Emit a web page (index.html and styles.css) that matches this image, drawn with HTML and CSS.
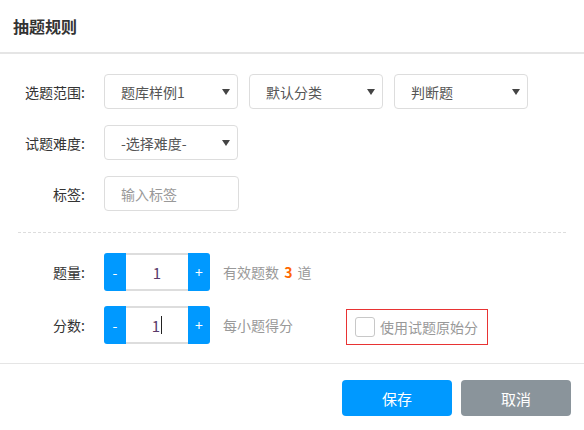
FILE: index.html
```html
<!DOCTYPE html>
<html lang="zh-CN">
<head>
    <meta charset="UTF-8">
    <meta name="viewport" content="width=device-width, initial-scale=1.0">
    <title>抽题规则</title>
    <link rel="stylesheet" href="styles.css">
</head>
<body>

    <div class="dialog">
        <div class="dialog-header">抽题规则</div>

        <div class="dialog-body">
            <div class="form-row">
                <label class="form-label">选题范围:</label>
                <span class="select-wrap">
                    <select class="form-select">
                        <option>题库样例1</option>
                    </select>
                </span>
                <span class="select-wrap">
                    <select class="form-select">
                        <option>默认分类</option>
                    </select>
                </span>
                <span class="select-wrap">
                    <select class="form-select">
                        <option>判断题</option>
                    </select>
                </span>
            </div>

            <div class="form-row">
                <label class="form-label">试题难度:</label>
                <span class="select-wrap">
                    <select class="form-select">
                        <option>-选择难度-</option>
                    </select>
                </span>
            </div>

            <div class="form-row">
                <label class="form-label">标签:</label>
                <input type="text" class="form-input" placeholder="输入标签">
            </div>

            <div class="divider"></div>

            <!-- question count -->
            <div class="form-row stepper-row">
                <label class="form-label">题量:</label>
                <div class="stepper">
                    <button class="step-btn minus">-</button>
                    <div class="step-value">1</div>
                    <button class="step-btn plus">+</button>
                </div>
                <span class="hint">有效题数 <b class="count">3</b> 道</span>
            </div>

            <!-- score per question -->
            <div class="form-row stepper-row">
                <label class="form-label">分数:</label>
                <div class="stepper">
                    <button class="step-btn minus">-</button>
                    <div class="step-value">1<span class="caret"></span></div>
                    <button class="step-btn plus">+</button>
                </div>
                <span class="hint hint-score">每小题得分</span>
                <label class="origin-score">
                    <span class="check-box"></span>
                    使用试题原始分
                </label>
            </div>
        </div>

        <div class="dialog-footer">
            <button class="btn btn-save">保存</button>
            <button class="btn btn-cancel">取消</button>
        </div>
    </div>

</body>
</html>
```

FILE: styles.css
```css
:root {
    --blue: #0099ff; --gray-btn: #8a949b; --border: #dddddd;
    --line: #e5e5e5; --text-dark: #333; --text-medium: #555; --text-light: #999;
    --orange: #ff6600; --red: #e83333;
}
body {
    margin: 0; background-color: #fff; color: var(--text-dark);
    font-family: "Noto Sans CJK SC", "Liberation Sans", sans-serif; font-size: 14px;
}
.dialog { width: 584px; }
.dialog-header {
    height: 52px; line-height: 52px; padding-left: 13px;
    font-size: 16px; font-weight: bold; color: var(--text-dark);
    border-bottom: 2px solid var(--line);
}
.dialog-body { padding: 20px 0 19px; }

.form-row { display: flex; align-items: center; height: 35px; margin-bottom: 16px; }
.form-label { width: 85px; margin-right: 19px; text-align: right; color: var(--text-dark); }

.select-wrap { position: relative; display: inline-block; margin-right: 11px; }
.select-wrap::after {
    content: ""; position: absolute; right: 8px; top: 15px;
    border-left: 4px solid transparent; border-right: 4px solid transparent;
    border-top: 6px solid #444; pointer-events: none;
}
.form-select, .form-input {
    box-sizing: border-box; width: 134px; height: 35px;
    border: 1px solid var(--border); border-radius: 4px; background: #fff;
    font-family: inherit; font-size: 14px; color: var(--text-medium);
    padding: 0 16px; outline: none;
}
.form-select { -webkit-appearance: none; appearance: none; }
.form-input { width: 135px; }
.form-input::placeholder { color: var(--text-light); }

.divider { border-top: 1px dashed var(--border); margin: 21px 18px 20px; }

.stepper-row { height: 38px; margin-bottom: 15px; }
.stepper-row:last-child { margin-bottom: 0; }
.stepper { display: flex; height: 38px; }
.step-btn {
    width: 22px; border: none; padding: 0; background-color: var(--blue);
    color: #fff; font-size: 14px; font-family: inherit; cursor: pointer;
}
.step-btn.minus { border-radius: 3px 0 0 3px; }
.step-btn.plus { border-radius: 0 3px 3px 0; }
.step-value {
    box-sizing: border-box; width: 62px; display: flex; align-items: center; justify-content: center;
    border-top: 2px solid var(--border); border-bottom: 2px solid var(--border);
    color: #5a3a6a; font-size: 15px;
}
.caret { display: inline-block; width: 1px; height: 18px; background: #222; margin-left: 1px; }

.hint { margin-left: 13px; color: var(--text-light); }
.hint .count { color: var(--orange); font-weight: bold; margin: 0 2px; }
.hint-score { width: 70px; }

.origin-score {
    display: flex; align-items: center; gap: 5px; box-sizing: border-box;
    height: 36px; margin-left: 53px; margin-top: 4px; padding: 0 9px 0 8px;
    border: 1px solid var(--red); color: var(--text-light); cursor: pointer;
}
.check-box {
    box-sizing: border-box; width: 20px; height: 20px;
    border: 1px solid #c8c8c8; border-radius: 3px; background: #fff;
}

.dialog-footer {
    display: flex; justify-content: flex-end; gap: 9px;
    border-top: 1px solid var(--line); padding: 16px 13px 0 0;
}
.btn {
    width: 110px; height: 36px; border: none; border-radius: 4px;
    color: #fff; font-family: inherit; font-size: 15px; cursor: pointer;
}
.btn-save { background-color: var(--blue); }
.btn-cancel { background-color: var(--gray-btn); }
```
